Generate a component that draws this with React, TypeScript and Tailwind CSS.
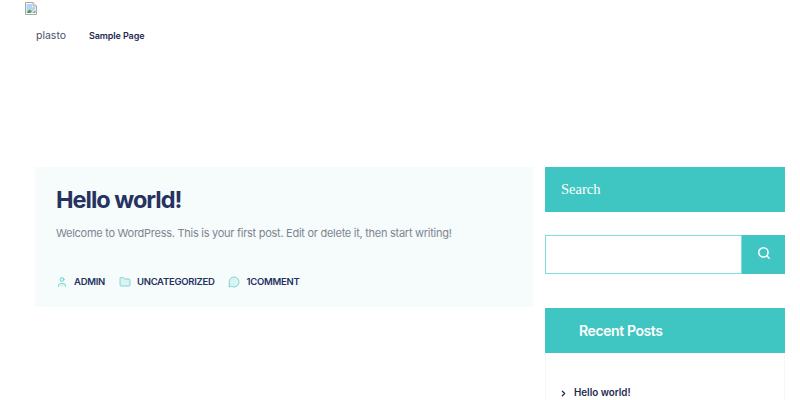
import React from 'react';
import { ChevronRight, Folder, MessageCircle, Search, User } from 'lucide-react';

const META = [
  { label: 'ADMIN', icon: User },
  { label: 'UNCATEGORIZED', icon: Folder },
  { label: '1 COMMENT', icon: MessageCircle },
];

const BrokenImage = () => (
  <svg width="12" height="13" viewBox="0 0 12 13" className="block">
    <path d="M0.5 0.5H8L11.5 4V12.5H0.5Z" fill="#fff" stroke="#a8a8a8" />
    <path d="M8 0.5V4H11.5" fill="#e8e8e8" stroke="#a8a8a8" />
    <path d="M1.5 2H7V5H10.5V7L6 11H1.5Z" fill="#b9d2f5" />
    <path d="M1.5 11L4.5 7.5L7 9.5L5 11Z" fill="#4f9a44" />
    <path d="M7 11L10.5 8V11Z" fill="#6fb35f" />
  </svg>
);

export default function App() {
  return (
    <div className="h-[400px] overflow-hidden bg-white font-['Inter',sans-serif]">
      <header className="h-[167px] pl-[25px] pt-[2px]">
        <BrokenImage />
        <nav className="mt-[13px] flex items-center pl-[11px]">
          <a className="w-[53px] text-[10.5px] leading-[16px] text-[#4a4f6a]">plasto</a>
          <a className="text-[9px] font-semibold leading-[16px] tracking-[-0.1px] text-[#23294f]">Sample Page</a>
        </nav>
      </header>

      <main className="flex gap-3 pl-[35px] pr-[15px]">
        <article className="h-[140px] w-[498px] bg-[#f6fbfb] pl-[21px] pt-[17px]">
          <h2 className="text-[23.5px] font-bold leading-[32px] tracking-[-1px] text-[#26325f]">Hello world!</h2>
          <p className="mt-[7px] text-[11px] leading-[20px] tracking-[-0.27px] text-[#7d8590]">
            Welcome to WordPress. This is your first post. Edit or delete it, then start writing!
          </p>
          <div className="mt-[31px] flex items-center gap-[14px]">
            {META.map(({ label, icon: Icon }) => (
              <span key={label} className="flex items-center gap-[6px] text-[9.5px] font-semibold leading-[16px] tracking-[-0.28px] [word-spacing:-2px] text-[#26325f]">
                <Icon className="h-[12px] w-[12px] fill-[#40c6c2]/15 text-[#40c6c2]" strokeWidth={1.25} />
                {label}
              </span>
            ))}
          </div>
        </article>

        <aside className="w-[240px]">
          <div className="flex h-[45px] items-center bg-[#40c6c2] pl-4 font-['Liberation_Serif',serif] text-[14.5px] text-white">
            Search
          </div>
          <div className="mt-[23px] flex h-[39px]">
            <input className="min-w-0 flex-1 border border-[#7fdedb] bg-white outline-none" />
            <button className="flex w-[43px] items-center justify-center bg-[#40c6c2] pb-[3px] text-white">
              <Search className="h-[14px] w-[14px]" strokeWidth={2.5} />
            </button>
          </div>
          <div className="mt-[34px] flex h-[45px] items-center bg-[#40c6c2] pb-[1px] pl-[34px] text-[14px] font-semibold tracking-[-0.4px] text-white">
            Recent Posts
          </div>
          <div className="h-[60px] border border-t-0 border-[#f5f7f7] pl-[13px] pt-[32px]">
            <a className="flex items-center gap-[6px] text-[9.8px] font-semibold leading-[16px] text-[#26294f]">
              <ChevronRight className="h-[9px] w-[9px]" strokeWidth={3.5} />
              Hello world!
            </a>
          </div>
        </aside>
      </main>
    </div>
  );
}
